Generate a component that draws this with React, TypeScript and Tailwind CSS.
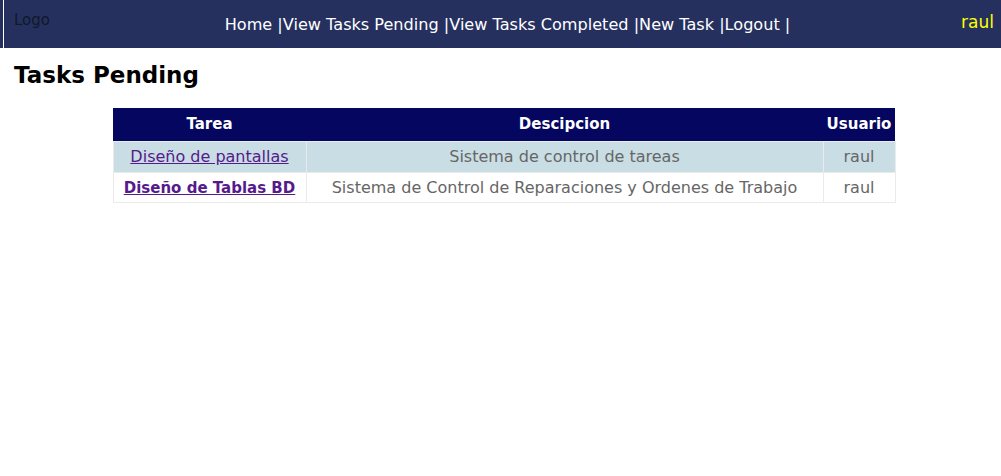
const tasks = [
  { name: 'Diseño de pantallas', desc: 'Sistema de control de tareas', user: 'raul', bold: false },
  { name: 'Diseño de Tablas BD', desc: 'Sistema de Control de Reparaciones y Ordenes de Trabajo', user: 'raul', bold: true },
];

const links = ['Home', 'View Tasks Pending', 'View Tasks Completed', 'New Task', 'Logout'];

export default function App() {
  return (
    <div className="min-h-[476px] bg-white font-['DejaVu_Sans',sans-serif]">
      <header className="flex h-12 bg-white">
        <div className="w-[3px] bg-[#25305f]" />
        <div className="ml-px flex flex-1 items-start bg-[#25305f]">
          <div className="w-[210px] pl-[10px] pt-[9px] text-[15px] text-[#111827]">Logo</div>
          <nav className="flex-1 pl-[6px] pt-[13px] text-center text-[16.1px] text-white">
            {links.map((l) => (
              <span key={l}>
                <a href="#">{l}</a> |
              </span>
            ))}
          </nav>
          <div className="w-[206px] pr-[7px] pt-[10px] text-right text-[17px] text-[#ffff00]">raul</div>
        </div>
      </header>

      <h2 className="px-[14px] pt-[10px] text-[23px] font-bold text-black">Tasks Pending</h2>

      <div className="flex justify-center pt-[15px] pl-[7px]">
        <table className="w-[783px] border-collapse text-[16px]">
          <thead>
            <tr className="h-[34px] bg-[#05065f] text-[15px] text-white">
              <th className="w-[193px] font-bold">Tarea</th>
              <th className="font-bold">Descipcion</th>
              <th className="w-[72px] font-bold">Usuario</th>
            </tr>
          </thead>
          <tbody>
            {tasks.map((t, i) => (
              <tr key={t.name} className={i === 0 ? 'h-[31px] bg-[#c9dde4]' : 'h-[30px] bg-white'}>
                <td className="border border-[#ebebeb] text-center">
                  <a href="#" className={t.bold ? 'text-[15px] font-bold text-[#551a8b] underline' : 'text-[#551a8b] underline'}>
                    {t.name}
                  </a>
                </td>
                <td className="border border-[#ebebeb] text-center text-[#666666]">{t.desc}</td>
                <td className="border border-[#ebebeb] text-center text-[#666666]">{t.user}</td>
              </tr>
            ))}
          </tbody>
        </table>
      </div>
    </div>
  );
}
